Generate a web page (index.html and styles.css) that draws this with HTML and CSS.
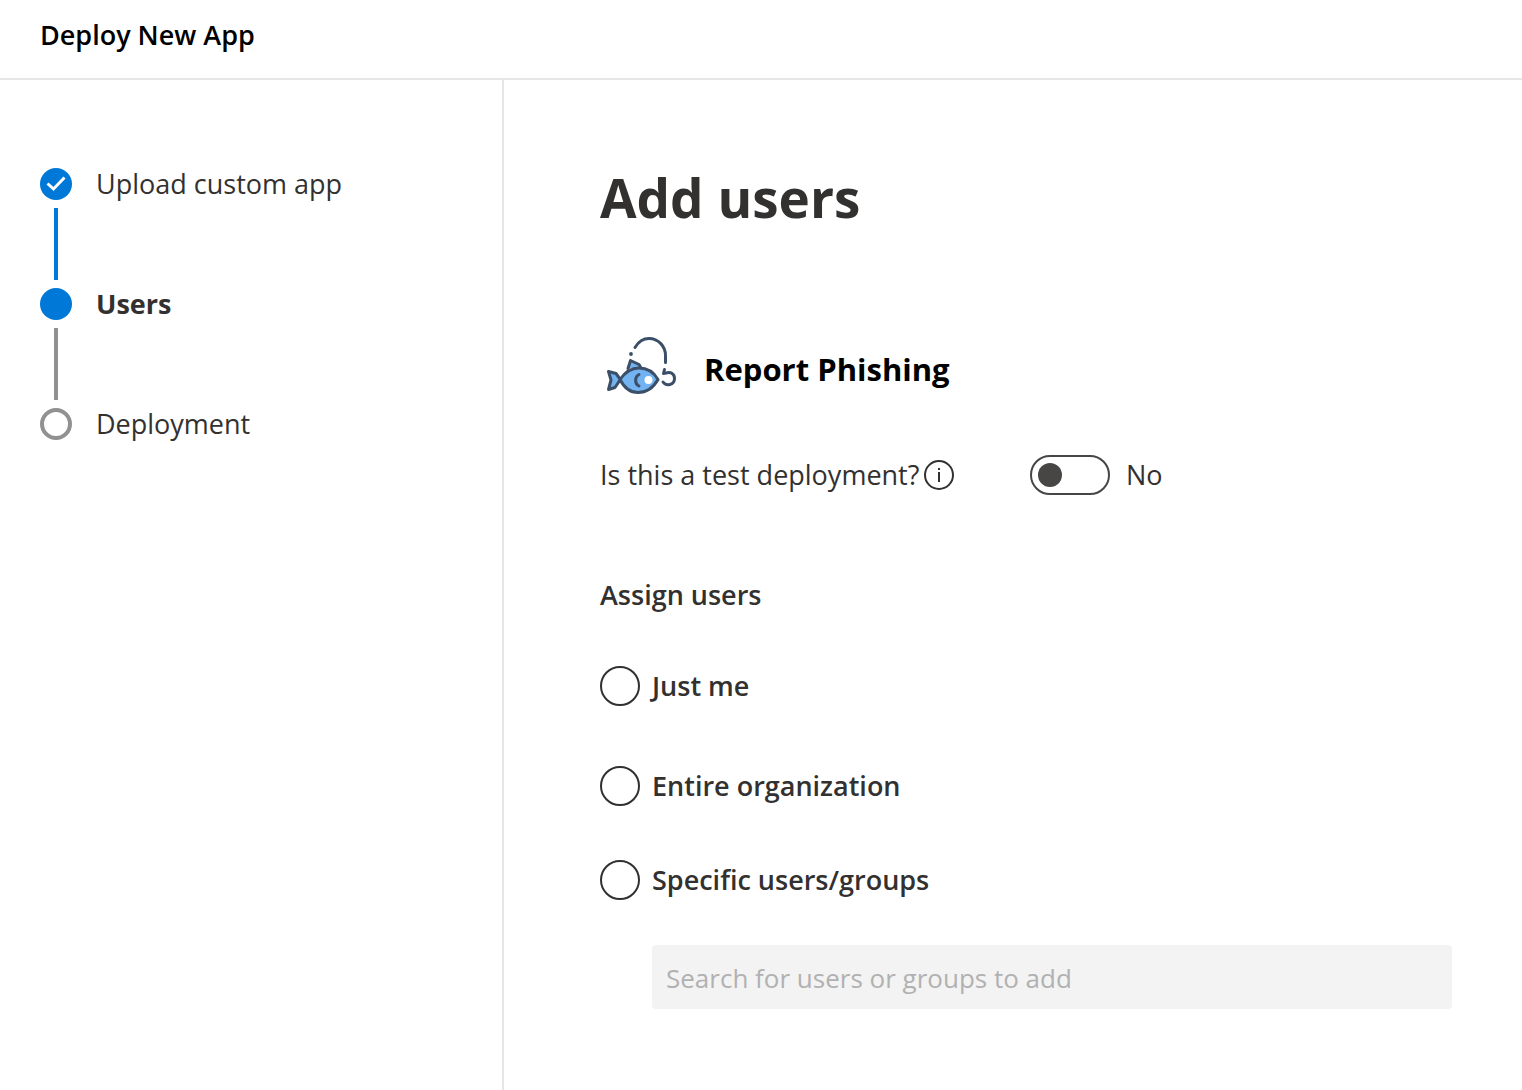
FILE: index.html
```html
<!DOCTYPE html>
<html lang="en">
<head>
<meta charset="utf-8">
<meta name="viewport" content="width=device-width, initial-scale=1">
<title>Deploy New App</title>
<link rel="stylesheet" href="styles.css">
</head>
<body>
<header class="topbar">
  <h2 class="topbar-title">Deploy New App</h2>
</header>
<div class="layout">
  <nav class="sidebar" aria-label="Progress">
    <ol class="steps">
      <li class="step step-done">
        <span class="marker"><svg viewBox="0 0 32 32" width="32" height="32" aria-hidden="true"><path d="M7.500 15.500 13.500 21 24.500 9.500" fill="none" stroke="#fff" stroke-width="3"/></svg></span>
        <span class="step-label">Upload custom app</span>
      </li>
      <li class="step step-current" aria-current="step">
        <span class="marker"></span>
        <span class="step-label">Users</span>
      </li>
      <li class="step step-todo">
        <span class="marker"></span>
        <span class="step-label">Deployment</span>
      </li>
    </ol>
  </nav>
  <main class="content">
    <h1 class="page-title">Add users</h1>
    <div class="app">
      <svg class="app-icon" viewBox="0 0 80 80" width="80" height="80" fill="none" stroke="#3b5068" stroke-width="3" stroke-linecap="round" stroke-linejoin="round" aria-hidden="true">
        <path d="M35 22.500C38.500 16.500 43 13.500 49 13.500C58.500 13.500 65.500 21.500 65.500 30.500V37.500"/>
        <circle cx="31" cy="29" r="1.900" fill="#3b5068" stroke="none"/>
        <path d="M28 43.500 30.500 35.500 39 39.500 41 43" fill="#73b3f2"/>
        <path d="M20 54 16 48.500 8.500 46.500 11 55 8.500 64.500 15 62.500 20 55" fill="#73b3f2"/>
        <path d="M20 54.500C25.500 46.500 31 43 39 43C47 43 54 47.500 58 54.500C53.500 62.500 47 67.500 38 67.500C30 67.500 24 62.500 20 54.500Z" fill="#73b3f2"/>
        <path d="M39 49.500C34.500 51.500 34.500 59 39 61"/>
        <circle cx="48.500" cy="55" r="4" fill="#fff" stroke="none"/>
        <path d="M64.500 44.500 63.500 48.500 66 48C71 46.500 74.500 49 74.500 53.500C74.500 60.500 66 61.500 63 57"/>
      </svg>
      <h2 class="app-name">Report Phishing</h2>
    </div>
    <div class="test-row">
      <div class="test-question">
        <label for="test">Is this a test deployment?</label>
        <button class="info" type="button" aria-label="About test deployments">
          <svg viewBox="0 0 30 30" width="30" height="30" aria-hidden="true"><circle cx="15" cy="15" r="14" fill="none" stroke="#323130" stroke-width="2"/><path d="M14 12h2v10h-2zM14 8h2v2h-2z" fill="#323130"/></svg>
        </button>
      </div>
      <input class="switch" type="checkbox" role="switch" id="test">
      <label class="switch-state" for="test">No</label>
    </div>
    <fieldset class="assign">
      <legend class="assign-title">Assign users</legend>
      <label class="option"><input class="radio" type="radio" name="assign">Just me</label>
      <label class="option"><input class="radio" type="radio" name="assign">Entire organization</label>
      <label class="option option-specific"><input class="radio" type="radio" name="assign">Specific users/groups</label>
      <input class="search" type="text" placeholder="Search for users or groups to add" aria-label="Search for users or groups to add">
    </fieldset>
  </main>
</div>
</body>
</html>
```
FILE: styles.css
```css
* { box-sizing: border-box; }

body {
  margin: 0;
  min-height: 100vh;
  display: flex;
  flex-direction: column;
  background: #fff;
  color: #323130;
  font: 400 27px/40px "Open Sans", "Noto Sans", sans-serif;
}

h1, h2, ol, fieldset, legend {
  margin: 0;
  padding: 0;
  border: 0;
}

.topbar {
  padding: 15px 40px 23px;
  border-bottom: 2px solid #e6e6e6;
}

.topbar-title {
  color: #000;
  font-size: 27px;
  font-weight: 600;
}

.layout {
  flex: 1;
  display: flex;
}

.sidebar {
  flex: 0 0 504px;
  padding: 84px 40px;
  border-right: 2px solid #e6e6e6;
}

.steps { list-style: none; }

.step {
  display: grid;
  grid-template-columns: 32px 1fr;
  grid-template-rows: 40px 80px;
  column-gap: 24px;
  align-items: center;
}

.step:last-child { grid-template-rows: 40px; }

.step:not(:last-child)::after {
  content: "";
  justify-self: center;
  width: 4px;
  height: 72px;
  background: #919191;
}

.step-done:not(:last-child)::after { background: #0078d7; }

.marker {
  width: 32px;
  height: 32px;
  border: 4px solid #919191;
  border-radius: 50%;
}

.marker svg { display: block; }

.step-done .marker,
.step-current .marker {
  border: 0;
  background: #0078d7;
}

.step-current .step-label { font-weight: 700; }

.content {
  flex: 1;
  min-width: 0;
  padding: 82px 70px 80px 96px;
}

.page-title {
  font-size: 53px;
  font-weight: 700;
  line-height: 72px;
}

.app {
  display: flex;
  align-items: center;
  gap: 24px;
  margin-top: 91px;
}

.app-name {
  padding-top: 8px;
  color: #000;
  font-size: 31px;
  font-weight: 700;
}

.test-row {
  display: flex;
  align-items: center;
  margin-top: 50px;
}

.test-question {
  display: flex;
  align-items: center;
  gap: 5px;
  width: 430px;
}

.info {
  padding: 0;
  border: 0;
  background: none;
}

.info svg { display: block; }

.switch {
  appearance: none;
  width: 80px;
  height: 40px;
  margin: 0 16px 0 0;
  padding: 6px;
  border: 2px solid #484644;
  border-radius: 20px;
}

.switch::before {
  content: "";
  display: block;
  width: 24px;
  height: 24px;
  border-radius: 50%;
  background: #484644;
}

.switch:checked::before { margin-left: auto; }

.assign {
  min-width: 0;
  margin-top: 80px;
  font-weight: 600;
}

.assign-title { margin-bottom: 51px; }

.option {
  display: flex;
  align-items: center;
  gap: 12px;
  margin-bottom: 60px;
}

.option-specific { margin: -6px 0 45px; }

.radio {
  appearance: none;
  width: 40px;
  height: 40px;
  margin: 0;
  border: 2px solid #323130;
  border-radius: 50%;
}

.radio:checked { box-shadow: inset 0 0 0 8px #fff, inset 0 0 0 20px #0078d7; }

.search {
  display: block;
  width: calc(100% - 52px);
  height: 64px;
  margin-left: 52px;
  padding: 2px 14px 0;
  border: 0;
  border-radius: 4px;
  background: #f3f3f3;
  font: inherit;
  font-size: 26px;
  font-weight: 400;
}

.search::placeholder { color: #b1b1b1; }
```
